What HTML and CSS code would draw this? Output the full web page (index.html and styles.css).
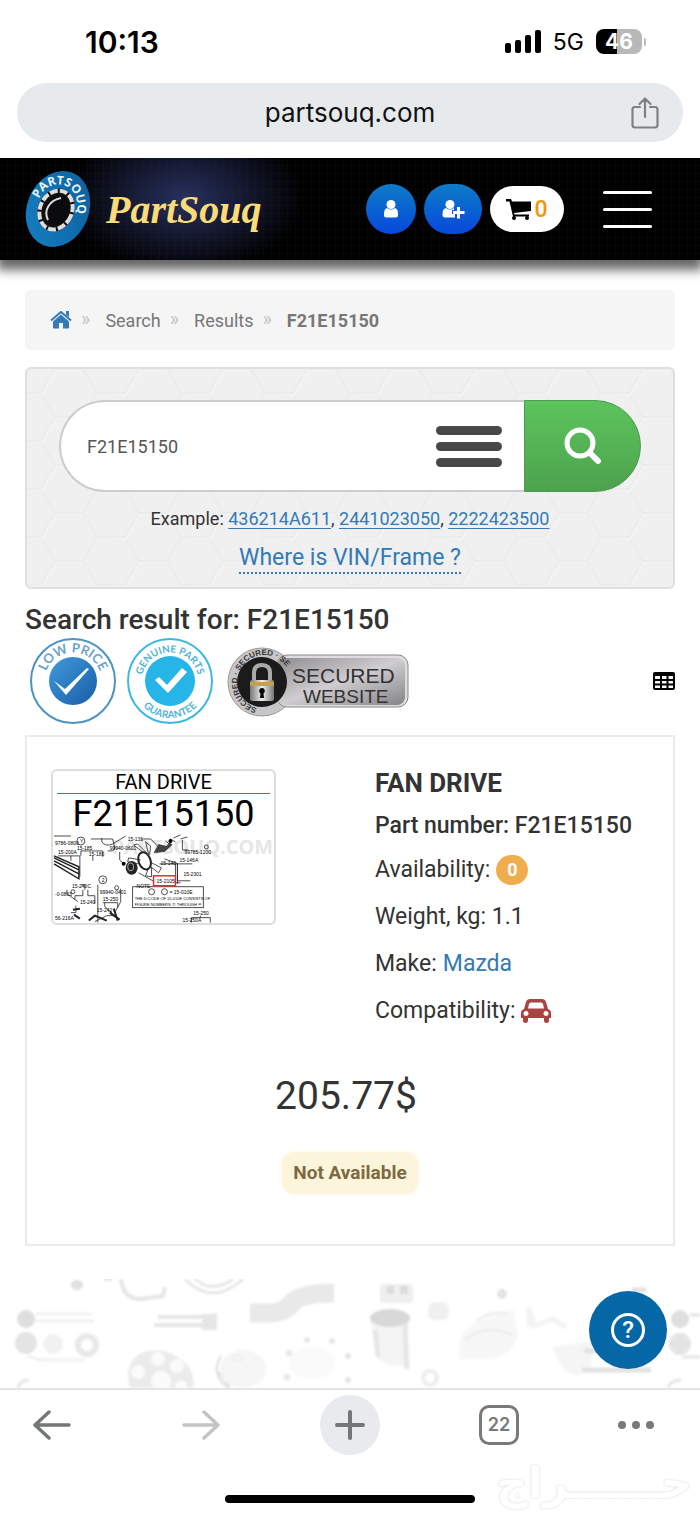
FILE: index.html
```html
<!DOCTYPE html>
<html lang="en">
<head>
    <meta charset="UTF-8">
    <meta name="viewport" content="width=device-width, initial-scale=1.0">
    <title>F21E15150 - PartSouq</title>
    <link rel="stylesheet" href="styles.css">
</head>
<body>
    <div class="status-bar">
        <span class="time">10:13</span>
        <div class="status-icons">
            <svg width="36" height="23" viewBox="0 0 36 23">
                <rect x="0" y="13" width="6" height="10" rx="2"/>
                <rect x="10" y="10" width="6" height="13" rx="2"/>
                <rect x="20" y="5" width="6" height="18" rx="2"/>
                <rect x="30" y="0" width="6" height="23" rx="2"/>
            </svg>
            <span class="network">5G</span>
            <span class="battery">46</span>
        </div>
    </div>
    <div class="address-bar">
        <span class="address">partsouq.com</span>
        <button class="share-btn" aria-label="Share">
            <svg width="28" height="32" viewBox="0 0 28 32" fill="none" stroke="#7d8184" stroke-width="2.2" stroke-linecap="round" stroke-linejoin="round">
                <path d="M9 10H4Q1.500 10 1.500 12.500V28Q1.500 30.500 4 30.500H24Q26.500 30.500 26.500 28V12.500Q26.500 10 24 10H19M14 20V2M8.500 7L14 1.500L19.500 7"/>
            </svg>
        </button>
    </div>

    <header class="site-header">
        <a href="#" class="logo">
            <svg width="66" height="78" viewBox="0 0 66 78">
                <defs>
                    <linearGradient id="tyre" x1="0" y1="1" x2="1" y2="0">
                        <stop offset="0" stop-color="#1580c4"/>
                        <stop offset="1" stop-color="#0d5f9c"/>
                    </linearGradient>
                    <path id="logoArc" d="M14 29C19 17 29 13 38 15C50 18 56 31 50 56"/>
                </defs>
                <ellipse cx="33" cy="39" rx="31" ry="39" transform="rotate(22 33 39)" fill="url(#tyre)"/>
                <ellipse cx="31" cy="40" rx="18" ry="22" transform="rotate(24 31 40)" fill="#111"/>
                <ellipse cx="31" cy="40" rx="16" ry="20" transform="rotate(24 31 40)" fill="none" stroke="#ddd" stroke-width="4" stroke-dasharray="8 2"/>
                <ellipse cx="32" cy="40" rx="12" ry="15" transform="rotate(24 32 40)" fill="#0b0b0d"/>
                <path d="M23 50C18 40 25 30 36 28" fill="none" stroke="#ddd" stroke-width="2"/>
                <text class="logo-ring"><textPath href="#logoArc">PARTSOUQ</textPath></text>
            </svg>
            <span class="logo-name">PartSouq</span>
        </a>
        <nav class="header-nav">
            <button class="round-btn" aria-label="Login">
                <svg width="16" height="18" viewBox="0 0 16 18" fill="#fff"><circle cx="8" cy="4.500" r="4.500"/><path d="M4 8Q8 11 12 8Q15 9 15 14V15Q15 17.500 12.500 17.500H3.500Q1 17.500 1 15V14Q1 9 4 8Z"/></svg>
            </button>
            <button class="round-btn round-btn-wide" aria-label="Register">
                <svg width="23" height="19" viewBox="0 0 23 19" fill="#fff"><circle cx="8" cy="4.500" r="4.500"/><path d="M4 8Q8 11 12 8V10H10V14H13V17.500H3Q.5 17.500 .5 15V14Q.5 9 4 8Z"/><path d="M15 7H18V11H22.500V14H18V18.500H15V14H11V11H15Z"/></svg>
            </button>
            <button class="cart-btn" aria-label="Cart">
                <svg width="26" height="21" viewBox="0 0 26 21"><path d="M0 0H5L6 2.500H25V12L8 14L8.500 15.500H23V17.500H7L3.500 2.500H0Z"/><circle cx="8" cy="19" r="2"/><circle cx="21" cy="19" r="2"/></svg>
                <span>0</span>
            </button>
            <button class="menu-btn" aria-label="Menu"><i></i><i></i><i></i></button>
        </nav>
    </header>

    <main class="container">
        <nav class="breadcrumb">
            <a href="#" aria-label="Home">
                <svg width="22" height="18" viewBox="0 0 22 18" fill="#337ab7"><path d="M11 3.500L19 10.500V16.500Q19 17.500 18 17.500H13V12H9V17.500H4Q3 17.500 3 16.500V10.500Z"/><path d="M1 9.500L11 1L21 9.500" fill="none" stroke="#337ab7" stroke-width="2"/><path d="M16 0H19V6L16 4Z"/></svg>
            </a>
            <span class="sep">»</span>
            <a href="#">Search</a>
            <span class="sep">»</span>
            <a href="#">Results</a>
            <span class="sep">»</span>
            <b>F21E15150</b>
        </nav>

        <section class="search-panel">
            <form class="search-form">
                <div class="search-field">
                    <input type="text" value="F21E15150" aria-label="Part number">
                    <button type="button" class="list-btn" aria-label="Options"><i></i><i></i><i></i></button>
                </div>
                <button type="submit" class="search-btn" aria-label="Search">
                    <svg width="38" height="38" viewBox="0 0 38 38" fill="none" stroke="#fff" stroke-linecap="round"><circle cx="16" cy="16" r="13" stroke-width="5"/><path d="M26 26L34 34" stroke-width="6"/></svg>
                </button>
            </form>
            <p class="examples">Example: <a href="#">436214A611</a>, <a href="#">2441023050</a>, <a href="#">2222423500</a></p>
            <a href="#" class="vin-link">Where is VIN/Frame ?</a>
        </section>

        <h1>Search result for: F21E15150</h1>
        <div class="badges">
            <svg width="86" height="86" viewBox="0 0 86 86">
                <defs>
                    <linearGradient id="blue" x1="0" y1="0" x2="1" y2="1"><stop offset="0" stop-color="#3f9bdc"/><stop offset="1" stop-color="#1a5ca5"/></linearGradient>
                    <path id="topArc" d="M14.500 43A28.500 28.500 0 0 1 71.500 43"/>
                    <path id="bottomArc" d="M6 43A37 37 0 0 0 80 43"/>
                </defs>
                <circle cx="43" cy="43" r="42" fill="#fff" stroke="#4c93c3" stroke-width="2"/>
                <circle cx="43" cy="43" r="24" fill="url(#blue)"/>
                <path d="M24 43L35 51L57 30L59 31L36 57Z" fill="#fff"/>
                <text class="badge-text low-price"><textPath href="#topArc" startOffset="50%">LOW PRICE</textPath></text>
            </svg>
            <svg width="86" height="86" viewBox="0 0 86 86">
                <circle cx="43" cy="43" r="42" fill="#fff" stroke="#3fb8e0" stroke-width="2"/>
                <circle cx="43" cy="43" r="25" fill="#27b5e8"/>
                <path d="M28 42L32 39L40 47L55 30L60 34L41 55Z" fill="#fff"/>
                <text class="badge-text genuine"><textPath href="#topArc" startOffset="50%">GENUINE PARTS</textPath></text>
                <text class="badge-text genuine"><textPath href="#bottomArc" startOffset="50%">GUARANTEE</textPath></text>
            </svg>
            <svg class="secured" width="182" height="72" viewBox="0 0 182 72">
                <defs>
                    <linearGradient id="steel" x1="0" y1="0" x2="1" y2="1"><stop offset="0" stop-color="#8f8d8f"/><stop offset=".5" stop-color="#cfcdcf"/><stop offset="1" stop-color="#858385"/></linearGradient>
                    <linearGradient id="lock" x1="0" y1="0" x2="1" y2="0"><stop offset="0" stop-color="#777"/><stop offset=".5" stop-color="#eee"/><stop offset="1" stop-color="#777"/></linearGradient>
                    <path id="sealArc" d="M30 63A27 27 0 0 1 30 11A27 27 0 0 1 58 20"/>
                </defs>
                <circle cx="35" cy="37" r="34" fill="#c8c6c8" stroke="#999"/>
                <rect x="50" y="10" width="131" height="52" rx="10" fill="#ddd" stroke="#888"/>
                <rect x="50" y="13" width="128" height="47" rx="8" fill="url(#steel)"/>
                <circle cx="35" cy="37" r="25" fill="#1b1b1c"/>
                <text class="seal-text"><textPath href="#sealArc">SECURED · SECURED · SE</textPath></text>
                <path d="M27 36V28Q27 20 35 20Q43 20 43 28V36" fill="none" stroke="#aaa" stroke-width="4"/>
                <rect x="23" y="35" width="24" height="21" rx="2" fill="url(#lock)"/>
                <path d="M23 37H47V41H23Z" fill="#c6a04d"/>
                <path d="M35 43A3 3 0 0 1 36.500 48.500L37 53H33L33.500 48.500A3 3 0 0 1 35 43Z"/>
                <text x="65" y="38" class="secured-big">SECURED</text>
                <text x="76" y="58" class="secured-small">WEBSITE</text>
            </svg>
            <button class="table-btn" aria-label="Table view">
                <svg width="22" height="18" viewBox="0 0 22 18"><rect width="22" height="18" rx="2"/><path d="M2 4H7V7H2ZM9 4H13.500V7H9ZM15.500 4H20V7H15.500ZM2 9H7V11.500H2ZM9 9H13.500V11.500H9ZM15.500 9H20V11.500H15.500ZM2 13.500H7V16H2ZM9 13.500H13.500V16H9ZM15.500 13.500H20V16H15.500Z" fill="#fff"/></svg>
            </button>
        </div>

        <article class="product">
            <div class="product-top">
                <div class="product-image">
                    <figure class="thumb">
                        <div class="thumb-name">FAN DRIVE</div>
                        <div class="thumb-number">F21E15150</div>
                        <svg class="diagram" viewBox="0 0 222 89">
                            <text x="221" y="20" class="watermark">PARTSOUQ.COM</text>
                            <g fill="none" stroke="#222" stroke-width=".8">
                                <path d="M1 2H18M38 5H60L62 14L60 17H55M49 4V8Q53 13 60 10L73 2M28 22V17H50V23M5 22H27M27 22V43M40 22V27M18 22V27"/>
                                <path d="M1 22L26 33V45L1 30M1 24L26 36M1 27L26 40" stroke-width="1.500"/>
                                <path d="M88 5H98L105 12M67 18V26L71 30M112 25L126 30H140M107 30H125V47H138M123 30V47M86 39L102 48M122 49H128M125 30V50"/>
                                <path d="M110 12L105 19M113 7L118 11M118 5L123 8M121 4L128 1M128 5L135 3M130 6V16H136"/>
                                <ellipse cx="92" cy="27" rx="6" ry="9" transform="rotate(-20 92 27)" stroke-width="2"/>
                                <path d="M90 18L81 11L85 10L94 19M96 20L93 8L98 12L97 21M88 26L76 24L75 28L86 30M96 34L93 42L99 43L99 33M99 29L109 34L106 39L97 32"/>
                                <path d="M45 51V89M28 51H32V56M14 56V60L25 68M30 56V62H22V66M35 56V62H42V70M23 72V79H18M68 55V68L62 79M52 69V73L60 80M50 69H65V74M42 88L54 82H63"/>
                                <path d="M20 76L27 75M21 81L27 85M57 79L67 86M61 75L65 87M36 87L42 82L54 87" stroke-width="2"/>
                                <rect x="80" y="53" width="71" height="21"/>
                                <path d="M139 89V84H158V89M148 82V84"/>
                                <circle cx="28" cy="7" r="4"/><circle cx="50" cy="46" r="4"/><circle cx="99" cy="58" r="3"/><circle cx="112" cy="58" r="3"/><circle cx="64" cy="54" r="2"/><circle cx="154" cy="13" r="2"/><circle cx="20" cy="58" r="2"/>
                            </g>
                            <ellipse cx="79" cy="34" rx="6" ry="7" fill="#222"/>
                            <ellipse cx="78" cy="33" rx="3" ry="4" fill="none" stroke="#aaa"/>
                            <path d="M101 19L106 10L114 12L117 8L120 11L112 18Z" fill="#444"/>
                            <circle cx="71" cy="30" r="2"/><circle cx="118" cy="7" r="2"/>
                            <rect x="101" y="42" width="22" height="10" fill="#fff" stroke="#e02b33" stroke-width="1.500"/>
                            <g class="labels">
                                <text x="75" y="7">15-131</text><text x="2" y="11">9786-0800</text><text x="24" y="16">15-185</text><text x="36" y="22">15-180</text>
                                <text x="5" y="20">15-200A</text><text x="57" y="16">99940-0601</text><text x="127" y="28">15-146A</text><text x="108" y="31">15-140</text>
                                <text x="131" y="42">15-2301</text><text x="104" y="49">15-2105</text><text x="132" y="20">99785-1200</text><text x="84" y="54">NOTE</text>
                                <text x="19" y="54">15-240C</text><text x="2" y="62">-0-0803</text><text x="27" y="70">15-240</text><text x="47" y="60">99940-0401</text>
                                <text x="50" y="67">15-250</text><text x="44" y="78">15-242</text><text x="2" y="86">56-216A</text><text x="117" y="60">= 15-010E</text>
                                <text x="141" y="81">15-250</text><text x="130" y="88">15-250A</text><text x="49" y="48">2</text><text x="27" y="9">Y</text>
                            </g>
                            <g class="notes">
                                <text x="82" y="66">THE D-CODE OF 15-010E CONSISTS OF</text>
                                <text x="82" y="72">FIGURE NUMBERS ① THROUGH ④</text>
                            </g>
                        </svg>
                    </figure>
                </div>
                <div class="product-info">
                    <h2>FAN DRIVE</h2>
                    <div class="row part-number">Part number: F21E15150</div>
                    <div class="row">Availability: <span class="count">0</span></div>
                    <div class="row">Weight, kg: 1.1</div>
                    <div class="row">Make: <a href="#">Mazda</a></div>
                    <div class="row">Compatibility:
                        <a href="#" aria-label="Compatible cars">
                            <svg width="30" height="24" viewBox="0 0 30 24"><path fill="#a94442" fill-rule="evenodd" d="M9 0H21Q24 0 25 3L27 10Q30 11 30 14V19H28V22Q28 24 25.500 24Q23 24 23 22V19H7V22Q7 24 4.500 24Q2 24 2 22V19H0V14Q0 11 3 10L5 3Q6 0 9 0ZM9.500 3.500Q8.500 3.500 8 5L7 9.500H23L22 5Q21.500 3.500 20.500 3.500ZM5 12A2.500 2.500 0 1 0 5.010 12ZM25 12A2.500 2.500 0 1 0 25.010 12Z"/></svg>
                        </a>
                    </div>
                </div>
            </div>
            <div class="price">205.77$</div>
            <div class="not-available">Not Available</div>
        </article>
    </main>

    <footer class="site-footer">
        <svg class="parts-art" viewBox="0 0 700 109" preserveAspectRatio="xMidYMid slice">
            <defs>
                <filter id="soft"><feGaussianBlur stdDeviation="1"/></filter>
            </defs>
            <g filter="url(#soft)" fill="none" stroke="#e6e6e6">
                <ellipse cx="77" cy="6" rx="6" ry="5" fill="#e0e0e0" stroke="none"/>
                <path d="M121 0Q123 20 140 20L163 17L165 8M104 0H112" stroke-width="4"/>
                <path d="M185 0Q212 28 243 0M195 0Q212 15 233 0" stroke-width="3"/>
                <path d="M250 34H270Q285 34 294 22Q304 14 334 14" stroke="#e9e9e9" stroke-width="19"/>
                <path d="M154 46H200L217 49M158 38H198L217 36" stroke-width="4"/><rect x="202" y="35" width="15" height="16" fill="#e6e6e6" stroke="none"/>
                <circle cx="26" cy="40" r="9" fill="#dedede" stroke="none"/><circle cx="26" cy="64" r="11" fill="#e4e4e4" stroke="none"/>
                <path d="M36 35H92M36 42H94M28 77L40 81H85" stroke="#f1f1f1" stroke-width="3"/>
                <circle cx="53" cy="65" r="10" fill="#f1f1f1" stroke="none"/><circle cx="87" cy="66" r="9" stroke="#e8e8e8" stroke-width="6"/>
                <path d="M130 109C122 80 140 69 163 72C183 76 197 93 193 109Z" fill="#ebebeb" stroke="none"/>
                <g fill="#fbfbfb" stroke="none"><circle cx="158" cy="80" r="7"/><circle cx="177" cy="87" r="7"/><circle cx="138" cy="93" r="7"/><circle cx="161" cy="102" r="10"/><circle cx="181" cy="107" r="6"/></g>
                <path d="M221 77Q210 94 228 109M219 93L230 109" stroke="#ddd" stroke-width="2"/><ellipse cx="243" cy="90" rx="23" ry="19" fill="#f6f6f6" stroke="none"/><ellipse cx="238" cy="79" rx="5" ry="3"/>
                <path d="M18 109Q20 101 29 101" stroke-width="3"/>
                <g fill="#e6e6e6" stroke="none"><circle cx="289" cy="74" r="3"/><circle cx="332" cy="62" r="3"/><circle cx="287" cy="98" r="3"/><circle cx="307" cy="61" r="3"/><circle cx="348" cy="77" r="3"/><circle cx="348" cy="101" r="3"/><ellipse cx="312" cy="84" rx="24" ry="16" fill="#fafafa"/></g>
                <rect x="380" y="5" width="33" height="19" rx="3" fill="#efefef" stroke="none"/><path d="M387 11H394M400 11H408" stroke="#dcdcdc" stroke-width="8"/>
                <path d="M371 42L376 78Q390 90 406 86L409 42Z" fill="#f4f4f4" stroke="none"/><ellipse cx="390" cy="39" rx="20" ry="9" fill="#d8d8d8" stroke="none"/><path d="M375 51L378 78M405 45L407 90" stroke-width="5"/>
                <rect x="428" y="23" width="21" height="18" rx="7" fill="#f0f0f0" stroke="none"/><circle cx="430" cy="99" r="7" stroke="#ededed" stroke-width="4"/>
                <circle cx="502" cy="15" r="5" fill="#e4e4e4" stroke="none"/>
                <path d="M460 81Q454 52 480 42L513 30L518 57Q510 83 475 80Z" fill="#f7f7f7" stroke="none"/>
                <path d="M477 42Q490 31 507 35M465 61Q485 44 512 56" stroke="#eee" stroke-width="3"/>
                <path d="M530 32L534 47L552 40L566 48M529 48V28" stroke="#f3f3f3" stroke-width="5"/>
                <path d="M552 68Q567 109 590 90L596 62Z" fill="#f5f5f5" stroke="none"/>
                <path d="M632 11H646M584 72H598M582 91H651" stroke="#e2e2e2" stroke-width="5"/>
                <circle cx="680" cy="40" r="9" fill="#dfdfdf" stroke="none"/><circle cx="680" cy="65" r="11" fill="#e4e4e4" stroke="none"/><path d="M682 78H700M690 36H700M668 109Q670 101 681 101" stroke-width="3"/>
            </g>
        </svg>
        <button class="help-btn" aria-label="Help"><span>?</span></button>
    </footer>

    <nav class="browser-bar">
        <div class="browser-buttons">
            <button aria-label="Back"><svg width="38" height="32" viewBox="0 0 38 32" fill="none" stroke="#737776" stroke-width="3.500" stroke-linecap="round" stroke-linejoin="round"><path d="M36 16H2M16 3L2 16L16 29"/></svg></button>
            <button aria-label="Forward"><svg width="38" height="32" viewBox="0 0 38 32" fill="none" stroke="#c4c4c4" stroke-width="3.500" stroke-linecap="round" stroke-linejoin="round"><path d="M2 16H36M22 3L36 16L22 29"/></svg></button>
            <button class="new-tab" aria-label="New tab"><svg width="30" height="30" viewBox="0 0 30 30" stroke="#737776" stroke-width="4" stroke-linecap="round"><path d="M15 2V28M2 15H28"/></svg></button>
            <button aria-label="Tabs"><span class="tab-count">22</span></button>
            <button aria-label="More"><svg width="38" height="10" viewBox="0 0 38 10" fill="#77797a"><circle cx="5" cy="5" r="4"/><circle cx="19" cy="5" r="4"/><circle cx="33" cy="5" r="4"/></svg></button>
        </div>
        <div class="home-indicator"></div>
        <span class="stamp" lang="ar" dir="rtl">حــــــراج</span>
    </nav>
</body>
</html>
```

FILE: styles.css
```css
* {
    box-sizing: border-box;
}
body {
    margin: 0;
    font-family: Roboto, sans-serif;
    font-size: 18px;
    color: #333;
    background-color: #fff;
}
button {
    border: none;
    padding: 0;
    background: none;
    font-family: inherit;
    cursor: pointer;
    display: flex;
    align-items: center;
    justify-content: center;
}
svg {
    display: block;
}
a {
    color: #337ab7;
    text-decoration: none;
}
.status-bar {
    height: 83px;
    padding: 0 58px 0 85px;
    display: flex;
    align-items: center;
    justify-content: space-between;
    font-family: Inter, sans-serif;
    color: #000;
}
.time {
    font-size: 30px;
    font-weight: 600;
}
.status-icons {
    display: flex;
    align-items: center;
    gap: 12px;
}
.network {
    font-size: 23px;
}
.battery {
    position: relative;
    width: 46px;
    height: 25px;
    border-radius: 8px;
    background: linear-gradient(90deg, #000 46%, #b8b8b8 46%);
    color: #fff;
    font-size: 21px;
    font-weight: 700;
    line-height: 25px;
    text-align: center;
}
.battery::after {
    content: "";
    position: absolute;
    right: -4px;
    top: 9px;
    width: 2px;
    height: 8px;
    border-radius: 0 2px 2px 0;
    background-color: #b8b8b8;
}
.address-bar {
    margin: 0 17px 16px;
    height: 59px;
    padding: 0 24px;
    border-radius: 30px;
    background-color: #e7eaed;
    display: grid;
    grid-template-columns: 28px 1fr 28px;
    align-items: center;
    font-family: Inter, sans-serif;
}
.address {
    grid-column: 2;
    text-align: center;
    font-size: 26px;
    color: #111;
}
.site-header {
    height: 102px;
    padding: 0 48px 0 25px;
    display: flex;
    align-items: center;
    justify-content: space-between;
    background:
        radial-gradient(ellipse 120px 75px at 185px 40px, #28305e, transparent),
        repeating-linear-gradient(90deg, transparent 0 7px, #060606 7px 8px),
        repeating-linear-gradient(#000 0 7px, #060606 7px 8px);
    box-shadow: 0 7px 10px 3px rgba(0, 0, 0, 0.6);
    clip-path: inset(0 0 -30px 0);
}
.logo {
    display: flex;
    align-items: center;
    gap: 15px;
}
.logo-ring {
    font: bold 12px "Open Sans", sans-serif;
    fill: #e8f3fa;
}
.logo-name {
    font: italic bold 40px "Liberation Serif", serif;
    color: #fbdc78;
}
.header-nav {
    display: flex;
    align-items: center;
    gap: 8px;
}
.round-btn {
    width: 50px;
    height: 50px;
    border-radius: 25px;
    background: linear-gradient(#0d7cc8, #0648dc);
}
.round-btn-wide {
    width: 58px;
}
.cart-btn {
    width: 74px;
    height: 46px;
    border-radius: 23px;
    background-color: #fff;
    gap: 2px;
    font-size: 23px;
    font-weight: 500;
    color: #f0950c;
}
.menu-btn {
    width: 49px;
    margin-left: 31px;
    flex-direction: column;
    gap: 14px;
}
.menu-btn i {
    width: 100%;
    height: 3px;
    border-radius: 2px;
    background-color: #fff;
}
.container {
    padding: 30px 25px 33px;
}
.breadcrumb {
    height: 60px;
    padding: 0 25px;
    margin-bottom: 17px;
    border-radius: 6px;
    background-color: #f5f5f5;
    display: flex;
    align-items: center;
    color: #777;
}
.breadcrumb a {
    color: #777;
}
.breadcrumb .sep {
    margin: 0 15px 2px 9px;
    font-size: 20px;
    color: #c4c4c4;
}
.search-panel {
    padding: 31px 32px 13px;
    border: 2px solid #dfdfdf;
    border-radius: 6px;
    background-color: #f0f0f0;
    background-image: url("data:image/svg+xml,%3Csvg xmlns='http://www.w3.org/2000/svg' width='84' height='48'%3E%3Cg fill='none' stroke-width='2'%3E%3Cpath d='M0 24H14L28 0H56L70 24H84M14 24L28 48H56L70 24' stroke='%23ececec'/%3E%3Cpath d='M2 26H15L29 2H56' stroke='%23f3f3f3'/%3E%3C/g%3E%3C/svg%3E");
    text-align: center;
}
.search-form {
    height: 92px;
    display: flex;
}
.search-field {
    flex: 1;
    min-width: 0;
    padding: 0 22px 0 26px;
    border: 2px solid #ccc;
    border-right: none;
    border-radius: 46px 0 0 46px;
    background-color: #fff;
    display: flex;
    align-items: center;
}
.search-field input {
    flex: 1;
    min-width: 0;
    height: 60px;
    padding: 0;
    border: none;
    outline: none;
    background: none;
    font: 18px Roboto, sans-serif;
    color: #555;
}
.list-btn {
    width: 66px;
    flex-direction: column;
    gap: 7px;
}
.list-btn i {
    width: 100%;
    height: 9px;
    border-radius: 5px;
    background-color: #484848;
}
.search-btn {
    width: 117px;
    border: 1px solid #4a9d4a;
    border-radius: 0 46px 46px 0;
    background: linear-gradient(#5cc45c, #4da24d);
}
.examples {
    margin: 15px 0 12px;
    line-height: 24px;
}
.examples a {
    text-decoration: underline;
    text-underline-offset: 3px;
}
.vin-link {
    display: inline-block;
    font-size: 23px;
    line-height: 29px;
    border-bottom: 2px dotted #337ab7;
    vertical-align: top;
}
h1 {
    margin: 15px 0 2px;
    font-size: 28px;
    font-weight: 500;
    line-height: 32px;
}
.badges {
    display: flex;
    align-items: center;
    gap: 11px;
    padding-left: 5px;
    margin-bottom: 11px;
}
.badge-text {
    font-family: Lato, sans-serif;
    text-anchor: middle;
}
.low-price {
    font-size: 13px;
    font-weight: 700;
    fill: #6ba3cb;
}
.genuine {
    font-size: 10px;
    font-weight: 700;
    fill: #50b4d8;
}
.secured {
    margin-left: 3px;
}
.seal-text {
    font: bold 8px "Liberation Sans", sans-serif;
    fill: #333;
}
.secured-big {
    font: 21px "Liberation Sans", sans-serif;
    fill: #333;
}
.secured-small {
    font: 19px "Liberation Sans", sans-serif;
    fill: #333;
}
.table-btn {
    margin-left: auto;
}
.product {
    padding: 31px 0 50px;
    border: 2px solid #ebebeb;
    display: flex;
    flex-direction: column;
    align-items: center;
}
.product-top {
    width: 100%;
    display: grid;
    grid-template-columns: 1fr 1fr;
}
.product-image {
    padding: 1px 0 0 24px;
}
.thumb {
    max-width: 225px;
    margin: 0;
    border: 2px solid #ddd;
    border-radius: 6px;
    overflow: hidden;
    text-align: center;
    color: #000;
}
.thumb-name {
    margin: 0 4px;
    border-bottom: 1px solid #337ab7;
    font-size: 20px;
    line-height: 22px;
}
.thumb-number {
    font-size: 36px;
    line-height: 40px;
}
.diagram {
    width: 100%;
}
.watermark {
    font: bold 20px "Open Sans", sans-serif;
    fill: #e6e6e6;
    text-anchor: end;
}
.labels {
    font: 5px "Liberation Sans", sans-serif;
    fill: #000;
}
.notes {
    font: 4px "Liberation Sans", sans-serif;
    fill: #000;
}
.product-info {
    padding-left: 25px;
    display: flex;
    flex-direction: column;
    gap: 17px;
}
.product-info h2 {
    margin: 0 0 -4px;
    font-size: 26px;
    line-height: 30px;
}
.row {
    display: flex;
    align-items: center;
    gap: 6px;
    font-size: 23px;
    line-height: 30px;
}
.part-number {
    margin-bottom: -3px;
    font-weight: 500;
}
.count {
    width: 32px;
    border-radius: 15px;
    background-color: #f0ad4e;
    color: #fff;
    font-size: 18px;
    font-weight: 700;
    text-align: center;
}
.price {
    margin: 46px 8px 32px 0;
    font-size: 39px;
    line-height: 48px;
}
.not-available {
    padding: 0 11px;
    border-radius: 12px;
    background-color: #fcf5dc;
    box-shadow: 0 0 4px #fcf5dc;
    font-size: 19px;
    font-weight: 700;
    line-height: 42px;
    color: #7d6a42;
}
.site-footer {
    position: relative;
    height: 109px;
}
.parts-art {
    width: 100%;
    height: 100%;
}
.help-btn {
    position: absolute;
    right: 33px;
    top: 12px;
    width: 78px;
    height: 78px;
    border-radius: 50%;
    background-color: #0567a6;
}
.help-btn span {
    width: 34px;
    height: 34px;
    border: 3px solid #fff;
    border-radius: 50%;
    font-size: 24px;
    font-weight: 500;
    line-height: 28px;
    color: #fff;
}
.browser-bar {
    position: relative;
    height: 128px;
    padding-top: 5px;
    border-top: 2px solid #e4e4e4;
}
.browser-buttons {
    height: 60px;
    padding: 0 51px 0 27px;
    display: grid;
    grid-template-columns: repeat(4, 50px) 26px;
    justify-content: space-between;
    align-items: center;
    justify-items: center;
}
.new-tab {
    width: 60px;
    height: 60px;
    border-radius: 50%;
    background-color: #e8eaee;
}
.tab-count {
    width: 40px;
    height: 40px;
    border: 3px solid #77797a;
    border-radius: 10px;
    font: 600 18px/34px Inter, sans-serif;
    color: #77797a;
}
.home-indicator {
    width: 250px;
    height: 8px;
    margin: 40px auto 0;
    border-radius: 4px;
    background-color: #000;
}
.stamp {
    position: absolute;
    right: 8px;
    bottom: 8px;
    font: bold 44px/50px "DejaVu Sans", sans-serif;
    color: #fff;
    text-shadow: 0 0 2px #c8ccd4;
}
```
